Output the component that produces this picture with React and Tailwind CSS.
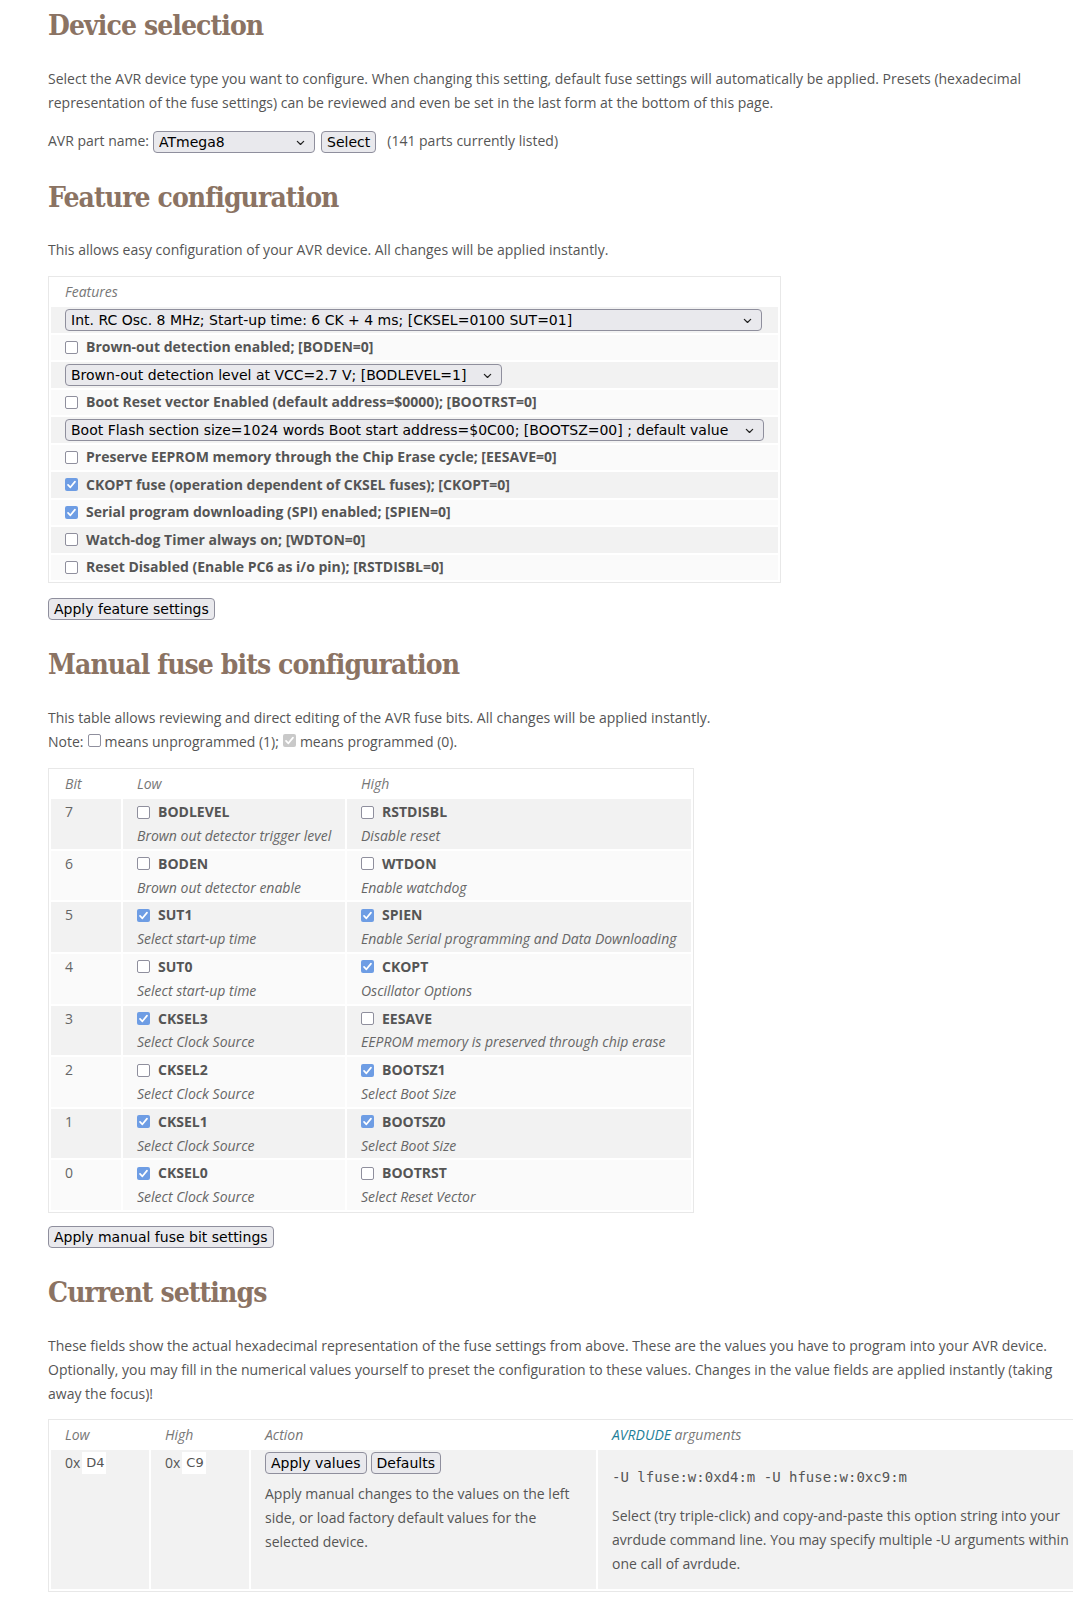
import React from "react"

const body = "font-['Open_Sans',sans-serif]"
const ctrl = "font-['DejaVu_Sans',sans-serif] text-[14px]"

const Heading = ({ children, className = "" }) => (
  <h2
    className={`font-['DejaVu_Serif_Condensed','DejaVu_Serif',serif] font-bold text-[28px] leading-8 pt-[4px] tracking-[-0.9px] text-[#8b7363] ${className}`}
  >
    {children}
  </h2>
)

const Check = ({ checked, disabled }) => {
  if (checked) {
    return (
      <span
        className={`inline-flex items-center justify-center w-[13px] h-[13px] rounded-[2px] shrink-0 ${
          disabled ? "bg-[#c9c9c9]" : "bg-[#6e9de4]"
        }`}
      >
        <svg viewBox="0 0 13 13" className="w-[13px] h-[13px]">
          <path d="M3 6.8 L5.4 9.3 L10 3.6" fill="none" stroke="white" strokeWidth="1.7" strokeLinecap="round" strokeLinejoin="round" />
        </svg>
      </span>
    )
  }
  return <span className="inline-block w-[13px] h-[13px] rounded-[2px] border border-[#8f8f9d] bg-white shrink-0" />
}

const Chevron = () => (
  <svg viewBox="0 0 10 6" className="w-[9px] h-[6px]">
    <path d="M1.5 1.2 L5 4.6 L8.5 1.2" fill="none" stroke="#222" strokeWidth="1.4" strokeLinecap="round" strokeLinejoin="round" />
  </svg>
)

const SelectBox = ({ value, width }) => (
  <span
    className={`relative inline-flex items-center h-[22px] ${width} rounded-[4px] border border-[#8f8f9d] bg-[#e9e9ed] ${ctrl} text-black pl-[5px] align-middle`}
  >
    <span className="whitespace-nowrap overflow-hidden">{value}</span>
    <span className="absolute right-[9px] top-[8px]">
      <Chevron />
    </span>
  </span>
)

const Btn = ({ children }) => (
  <button
    className={`inline-flex items-center h-[22px] px-[5px] rounded-[4px] border border-[#8f8f9d] bg-[#e9e9ed] ${ctrl} text-black align-middle`}
  >
    {children}
  </button>
)

const featureRows = [
  { select: true, text: "Int. RC Osc. 8 MHz; Start-up time: 6 CK + 4 ms; [CKSEL=0100 SUT=01]", w: "w-[697px]" },
  { text: "Brown-out detection enabled; [BODEN=0]" },
  { select: true, text: "Brown-out detection level at VCC=2.7 V; [BODLEVEL=1]", w: "w-[437px]" },
  { text: "Boot Reset vector Enabled (default address=$0000); [BOOTRST=0]" },
  { select: true, text: "Boot Flash section size=1024 words Boot start address=$0C00; [BOOTSZ=00] ; default value", w: "w-[699px]" },
  { text: "Preserve EEPROM memory through the Chip Erase cycle; [EESAVE=0]" },
  { text: "CKOPT fuse (operation dependent of CKSEL fuses); [CKOPT=0]", checked: true },
  { text: "Serial program downloading (SPI) enabled; [SPIEN=0]", checked: true },
  { text: "Watch-dog Timer always on; [WDTON=0]" },
  { text: "Reset Disabled (Enable PC6 as i/o pin); [RSTDISBL=0]" },
]

const fuseRows = [
  { bit: 7, low: ["BODLEVEL", false, "Brown out detector trigger level"], high: ["RSTDISBL", false, "Disable reset"] },
  { bit: 6, low: ["BODEN", false, "Brown out detector enable"], high: ["WTDON", false, "Enable watchdog"] },
  { bit: 5, low: ["SUT1", true, "Select start-up time"], high: ["SPIEN", true, "Enable Serial programming and Data Downloading"] },
  { bit: 4, low: ["SUT0", false, "Select start-up time"], high: ["CKOPT", true, "Oscillator Options"] },
  { bit: 3, low: ["CKSEL3", true, "Select Clock Source"], high: ["EESAVE", false, "EEPROM memory is preserved through chip erase"] },
  { bit: 2, low: ["CKSEL2", false, "Select Clock Source"], high: ["BOOTSZ1", true, "Select Boot Size"] },
  { bit: 1, low: ["CKSEL1", true, "Select Clock Source"], high: ["BOOTSZ0", true, "Select Boot Size"] },
  { bit: 0, low: ["CKSEL0", true, "Select Clock Source"], high: ["BOOTRST", false, "Select Reset Vector"] },
]

const FuseCell = ({ data, bg }) => {
  const [name, checked, desc] = data
  return (
    <td className={`${bg} pl-[14px] pr-[2px] py-px align-top leading-[23.8px]`}>
      <div className="flex items-center gap-[8px] font-bold text-[#555]">
        <Check checked={checked} />
        {name}
      </div>
      <div className="italic text-[#666] whitespace-nowrap">{desc}</div>
    </td>
  )
}

export default function App() {
  return (
    <div className={`w-full overflow-hidden bg-white ${body} text-[14px] leading-6 text-[#555]`}>
      <div className="pl-12 pr-[18px] pt-[6px] pb-[12px]">
        {/* Device selection */}
        <Heading>Device selection</Heading>
        <p className="mt-[25px]">
          Select the AVR device type you want to configure. When changing this setting, default fuse settings will
          automatically be applied. Presets (hexadecimal representation of the fuse settings) can be reviewed and even be
          set in the last form at the bottom of this page.
        </p>
        <div className="mt-[14px] h-6 flex items-center">
          <span>AVR part name:</span>
          <span className="ml-[4px]">
            <SelectBox value="ATmega8" width="w-[162px]" />
          </span>
          <span className="ml-[6px]">
            <Btn>Select</Btn>
          </span>
          <span className="ml-[11px]">(141 parts currently listed)</span>
        </div>

        {/* Feature configuration */}
        <Heading className="mt-[25px]">Feature configuration</Heading>
        <p className="mt-[24px]">This allows easy configuration of your AVR device. All changes will be applied instantly.</p>
        <div className="mt-[14px] w-[733px] border border-[#e8e8e8] p-[2px] flex flex-col gap-[2px]">
          <div className="h-[26px] flex items-center px-[14px] italic text-[#777]">Features</div>
          {featureRows.map((r, i) => (
            <div
              key={i}
              className={`h-[25.5px] flex items-center px-[14px] ${i % 2 === 0 ? "bg-[#f2f2f2]" : "bg-[#fafafa]"}`}
            >
              {r.select ? (
                <SelectBox value={r.text} width={r.w} />
              ) : (
                <label className="flex items-center gap-[8px] font-bold text-[#555]">
                  <Check checked={r.checked} />
                  {r.text}
                </label>
              )}
            </div>
          ))}
        </div>
        <div className="mt-[13px]">
          <Btn>Apply feature settings</Btn>
        </div>

        {/* Manual fuse bits */}
        <Heading className="mt-[25px]">Manual fuse bits configuration</Heading>
        <div className="mt-[25px]">
          <p>This table allows reviewing and direct editing of the AVR fuse bits. All changes will be applied instantly.</p>
          <p className="flex items-center">
            Note:
            <span className="mx-[4px]">
              <Check />
            </span>
            means unprogrammed (1);
            <span className="mx-[4px]">
              <Check checked disabled />
            </span>
            means programmed (0).
          </p>
        </div>
        <table className="mt-[14px] border-separate border-spacing-[2px] border border-[#e8e8e8]">
          <thead>
            <tr className="h-[26px] italic text-[#777] text-left">
              <th className="w-[70px] min-w-[70px] px-[14px] font-normal">Bit</th>
              <th className="w-[222px] min-w-[222px] px-[14px] font-normal">Low</th>
              <th className="w-[344px] min-w-[344px] px-[14px] font-normal">High</th>
            </tr>
          </thead>
          <tbody>
            {fuseRows.map((r, i) => {
              const bg = i % 2 === 0 ? "bg-[#f2f2f2]" : "bg-[#fafafa]"
              return (
                <tr key={r.bit}>
                  <td className={`${bg} px-[14px] py-px align-top leading-[23.8px] text-[#666]`}>{r.bit}</td>
                  <FuseCell data={r.low} bg={bg} />
                  <FuseCell data={r.high} bg={bg} />
                </tr>
              )
            })}
          </tbody>
        </table>
        <div className="mt-[11px]">
          <Btn>Apply manual fuse bit settings</Btn>
        </div>

        {/* Current settings */}
        <Heading className="mt-[25px]">Current settings</Heading>
        <p className="mt-[25px]">
          These fields show the actual hexadecimal representation of the fuse settings from above. These are the values you
          have to program into your AVR device. Optionally, you may fill in the numerical values yourself to preset the
          configuration to these values. Changes in the value fields are applied instantly (taking away the focus)!
        </p>
        <table className="mt-[13px] border-separate border-spacing-[2px] border border-[#e8e8e8]">
          <thead>
            <tr className="h-[26px] italic text-[#777] text-left">
              <th className="w-[98px] min-w-[98px] px-[14px] font-normal">Low</th>
              <th className="w-[98px] min-w-[98px] px-[14px] font-normal">High</th>
              <th className="w-[345px] min-w-[345px] px-[14px] font-normal">Action</th>
              <th className="w-[498px] min-w-[498px] px-[14px] font-normal">
                <span className="text-[#1f7f99]">AVRDUDE</span> arguments
              </th>
            </tr>
          </thead>
          <tbody>
            <tr className="bg-[#f2f2f2]">
              {["D4", "C9"].map((v) => (
                <td key={v} className="align-top px-[14px] pt-px">
                  <div className="flex items-center h-6">
                    <span>0x</span>
                    <span className={`ml-[2px] inline-flex items-center h-[22px] w-[24px] bg-white pl-[4px] font-['DejaVu_Sans',sans-serif] text-[13px] text-[#555]`}>
                      {v}
                    </span>
                  </div>
                </td>
              ))}
              <td className="align-top px-[14px] pt-[2px]">
                <div className="flex gap-[4px]">
                  <Btn>Apply values</Btn>
                  <Btn>Defaults</Btn>
                </div>
                <p className="mt-[8px]">
                  Apply manual changes to the values on the left side, or load factory default values for the selected
                  device.
                </p>
              </td>
              <td className="align-top px-[14px] pt-[15px] pb-[13px]">
                <div className="font-['DejaVu_Sans_Mono',monospace] text-[14px] leading-6">
                  -U lfuse:w:0xd4:m -U hfuse:w:0xc9:m
                </div>
                <p className="mt-[15px] w-[470px]">
                  Select (try triple-click) and copy-and-paste this option string into your avrdude command line. You may
                  specify multiple -U arguments within one call of avrdude.
                </p>
              </td>
            </tr>
          </tbody>
        </table>
      </div>
    </div>
  )
}
